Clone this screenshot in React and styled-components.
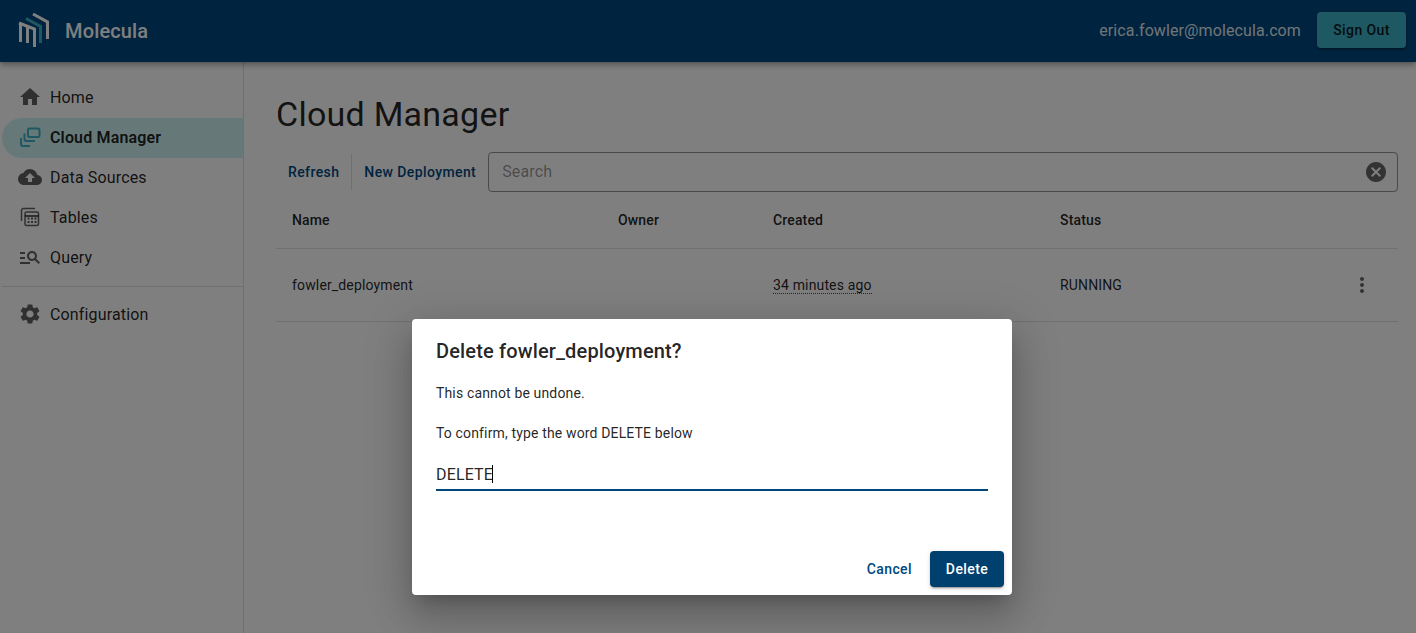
import React from "react";
import styled, { createGlobalStyle } from "styled-components";
import { MdHome, MdCloudUpload, MdManageSearch, MdSettings, MdCancel, MdMoreVert } from "react-icons/md";

const Global = createGlobalStyle`
  html, body { margin: 0; padding: 0; height: 100%; background: #fff; overflow: hidden; }
  body { font-family: Roboto, "Liberation Sans", sans-serif; color: rgba(0,0,0,.87); }
  * { box-sizing: border-box; }
`;
const Page = styled.div`display:flex;flex-direction:column;height:633px;position:relative;`;
const Header = styled.header`
  height:62px;flex:none;background:#00477e;display:flex;align-items:center;padding:0 10px 0 18px;
  box-shadow:0 2px 4px -1px rgba(0,0,0,.2),0 4px 5px 0 rgba(0,0,0,.14),0 1px 10px 0 rgba(0,0,0,.12);
  position:relative;z-index:1;
`;
const Brand = styled.div`font-size:20px;font-weight:500;color:#fff;letter-spacing:.15px;margin-left:15px;flex:1;`;
const Email = styled.div`font-size:16px;color:rgba(255,255,255,.9);letter-spacing:.11px;margin-right:16px;padding-bottom:2px;`;
const SignOut = styled.button`
  width:89px;height:36px;border:0;border-radius:4px;background:#3cb0c4;color:rgba(0,0,0,.87);
  font:500 14px Roboto,sans-serif;letter-spacing:.4px;margin-top:-2px;
  box-shadow:0 3px 1px -2px rgba(0,0,0,.2),0 2px 2px 0 rgba(0,0,0,.14),0 1px 5px 0 rgba(0,0,0,.12);
`;
const Body = styled.div`flex:1;display:flex;min-height:0;`;
const Side = styled.nav`width:244px;flex:none;border-right:1px solid rgba(0,0,0,.12);padding:16px 0 0 2px;`;
const Item = styled.div`
  height:40px;display:flex;align-items:center;padding:0 0 2px 16px;font-size:16px;letter-spacing:.15px;
  border-radius:20px 0 0 20px;
  font-weight:${p=>p.$active?600:400};
  background:${p=>p.$active?"#cef0f0":"transparent"};
  color:rgba(0,0,0,.87);
`;
const IconBox = styled.span`
  width:24px;height:24px;display:flex;align-items:center;justify-content:center;margin-right:8px;flex:none;
  color:${p=>p.$active?"#3cb0c4":"rgba(0,0,0,.62)"};
`;
const Rule = styled.hr`border:0;border-top:1px solid rgba(0,0,0,.12);margin:8px 0 8px 0;`;
const Main = styled.main`flex:1;padding:32px 18px 0 32px;min-width:0;`;
const Title = styled.h1`margin:0;font-size:34px;font-weight:400;line-height:40px;letter-spacing:.25px;`;
const Toolbar = styled.div`display:flex;align-items:center;margin-top:18px;height:40px;`;
const TextBtn = styled.button`
  border:0;background:none;color:#00477e;font:500 14px Roboto,sans-serif;letter-spacing:.4px;
  padding:0 12px;height:40px;white-space:nowrap;
`;
const VSep = styled.span`width:1px;height:36px;background:rgba(0,0,0,.12);`;
const Search = styled.div`
  flex:1;height:40px;border:1px solid rgba(0,0,0,.42);border-radius:4px;display:flex;align-items:center;
  justify-content:space-between;padding:0 9px 0 13px;font-size:16px;letter-spacing:.15px;color:rgba(0,0,0,.42);
`;
const SearchText = styled.span`margin-top:-2px;`;
const Row = styled.div`
  display:grid;grid-template-columns:326px 155px 287px 1fr 40px;align-items:center;padding:0 16px;
  height:${p=>p.$h}px;border-bottom:1px solid rgba(0,0,0,.12);font-size:14px;letter-spacing:.15px;
  font-weight:${p=>p.$head?500:400};
`;
const Dotted = styled.span`border-bottom:1px dotted rgba(0,0,0,.7);justify-self:start;line-height:16px;`;
const More = styled.span`justify-self:end;display:flex;color:rgba(0,0,0,.6);margin-right:8px;`;
const Overlay = styled.div`position:absolute;inset:0;background:rgba(0,0,0,.5);z-index:5;padding:319px 0 0 412px;`;
const Dialog = styled.div`
  width:600px;height:276px;background:#fff;border-radius:4px;display:flex;flex-direction:column;
  box-shadow:0 11px 15px -7px rgba(0,0,0,.2),0 24px 38px 3px rgba(0,0,0,.14),0 9px 46px 8px rgba(0,0,0,.12);
`;
const DTitle = styled.h2`margin:16px 24px 0;font-size:20px;font-weight:500;line-height:32px;letter-spacing:.15px;`;
const DText = styled.p`margin:${p=>p.$mt}px 24px 0;font-size:14px;line-height:20px;letter-spacing:.15px;`;
const Field = styled.div`
  margin:16px 24px 0;height:32px;border-bottom:2px solid #00477e;font-size:16px;letter-spacing:.15px;line-height:32px;display:flex;
`;
const Caret = styled.span`width:1px;height:18px;background:#000;margin-top:6px;margin-left:-1px;`;
const Actions = styled.div`margin-top:auto;padding:0 8px 8px;display:flex;justify-content:flex-end;align-items:center;gap:10px;`;
const Cancel = styled.button`
  border:0;background:none;color:#00477e;font:500 14px Roboto,sans-serif;letter-spacing:.4px;height:36px;padding:0 8px;
`;
const Confirm = styled.button`
  width:74px;height:36px;border:0;border-radius:4px;background:#00406f;color:#fff;font:500 14px Roboto,sans-serif;letter-spacing:.4px;
  box-shadow:0 3px 1px -2px rgba(0,0,0,.2),0 2px 2px 0 rgba(0,0,0,.14),0 1px 5px 0 rgba(0,0,0,.12);
`;

const Logo = () => (
  <svg width="32" height="36" viewBox="0 0 32 36" fill="none" strokeWidth="3">
    <path d="M1 10 L16.5 16 V34 M2.5 10.5 V29 M9.5 13 V30" stroke="#fff"/>
    <path d="M8 5.5 L22.5 13.5 V30" stroke="#3cb0c4"/>
    <path d="M15 1 L29.5 9 V26" stroke="#fff"/>
  </svg>
);
const CloudIcon = () => (
  <svg width="22" height="22" viewBox="0 0 22 22" fill="none" stroke="currentColor" strokeWidth="2">
    <rect x="9" y="2.5" width="11.5" height="8.5" rx="1.5"/>
    <path d="M5.5 7.5 V13 a2 2 0 0 0 2 2 H16"/>
    <path d="M2 12 V18 a2 2 0 0 0 2 2 H11"/>
  </svg>
);
const TableIcon = () => (
  <svg width="20" height="20" viewBox="0 0 20 20" fill="none" stroke="currentColor" strokeWidth="1.5">
    <path d="M1.5 14 V3.5 a2 2 0 0 1 2 -2 H15"/>
    <rect x="5" y="5" width="13.5" height="13.5" rx="1.5"/>
    <path d="M5 9 H18.5" strokeWidth="2"/>
    <path d="M7.5 11.5 H9.5 M11 11.5 H13 M14.5 11.5 H16.5 M7.5 15 H9.5 M11 15 H13 M14.5 15 H16.5" strokeWidth="1.8"/>
  </svg>
);

export default function App() {
  return (
    <Page>
      <Global />
      <Header>
        <Logo />
        <Brand>Molecula</Brand>
        <Email>erica.fowler@molecula.com</Email>
        <SignOut>Sign Out</SignOut>
      </Header>
      <Body>
        <Side>
          <Item><IconBox><MdHome size={24}/></IconBox>Home</Item>
          <Item $active><IconBox $active><CloudIcon/></IconBox>Cloud Manager</Item>
          <Item><IconBox><MdCloudUpload size={24}/></IconBox>Data Sources</Item>
          <Item><IconBox><TableIcon/></IconBox>Tables</Item>
          <Item><IconBox><MdManageSearch size={24}/></IconBox>Query</Item>
          <Rule/>
          <Item><IconBox><MdSettings size={24}/></IconBox>Configuration</Item>
        </Side>
        <Main>
          <Title>Cloud Manager</Title>
          <Toolbar>
            <TextBtn>Refresh</TextBtn><VSep/><TextBtn>New Deployment</TextBtn>
            <Search><SearchText>Search</SearchText><MdCancel size={24} color="rgba(0,0,0,.6)"/></Search>
          </Toolbar>
          <Row $head $h={57}><span>Name</span><span>Owner</span><span>Created</span><span>Status</span></Row>
          <Row $h={73}><span>fowler_deployment</span><span/><Dotted>34 minutes ago</Dotted><span>RUNNING</span><More><MdMoreVert size={24}/></More></Row>
        </Main>
      </Body>
      <Overlay>
        <Dialog>
          <DTitle>Delete fowler_deployment?</DTitle>
          <DText $mt={16}>This cannot be undone.</DText>
          <DText $mt={20}>To confirm, type the word DELETE below</DText>
          <Field>DELETE<Caret/></Field>
          <Actions><Cancel>Cancel</Cancel><Confirm>Delete</Confirm></Actions>
        </Dialog>
      </Overlay>
    </Page>
  );
}
